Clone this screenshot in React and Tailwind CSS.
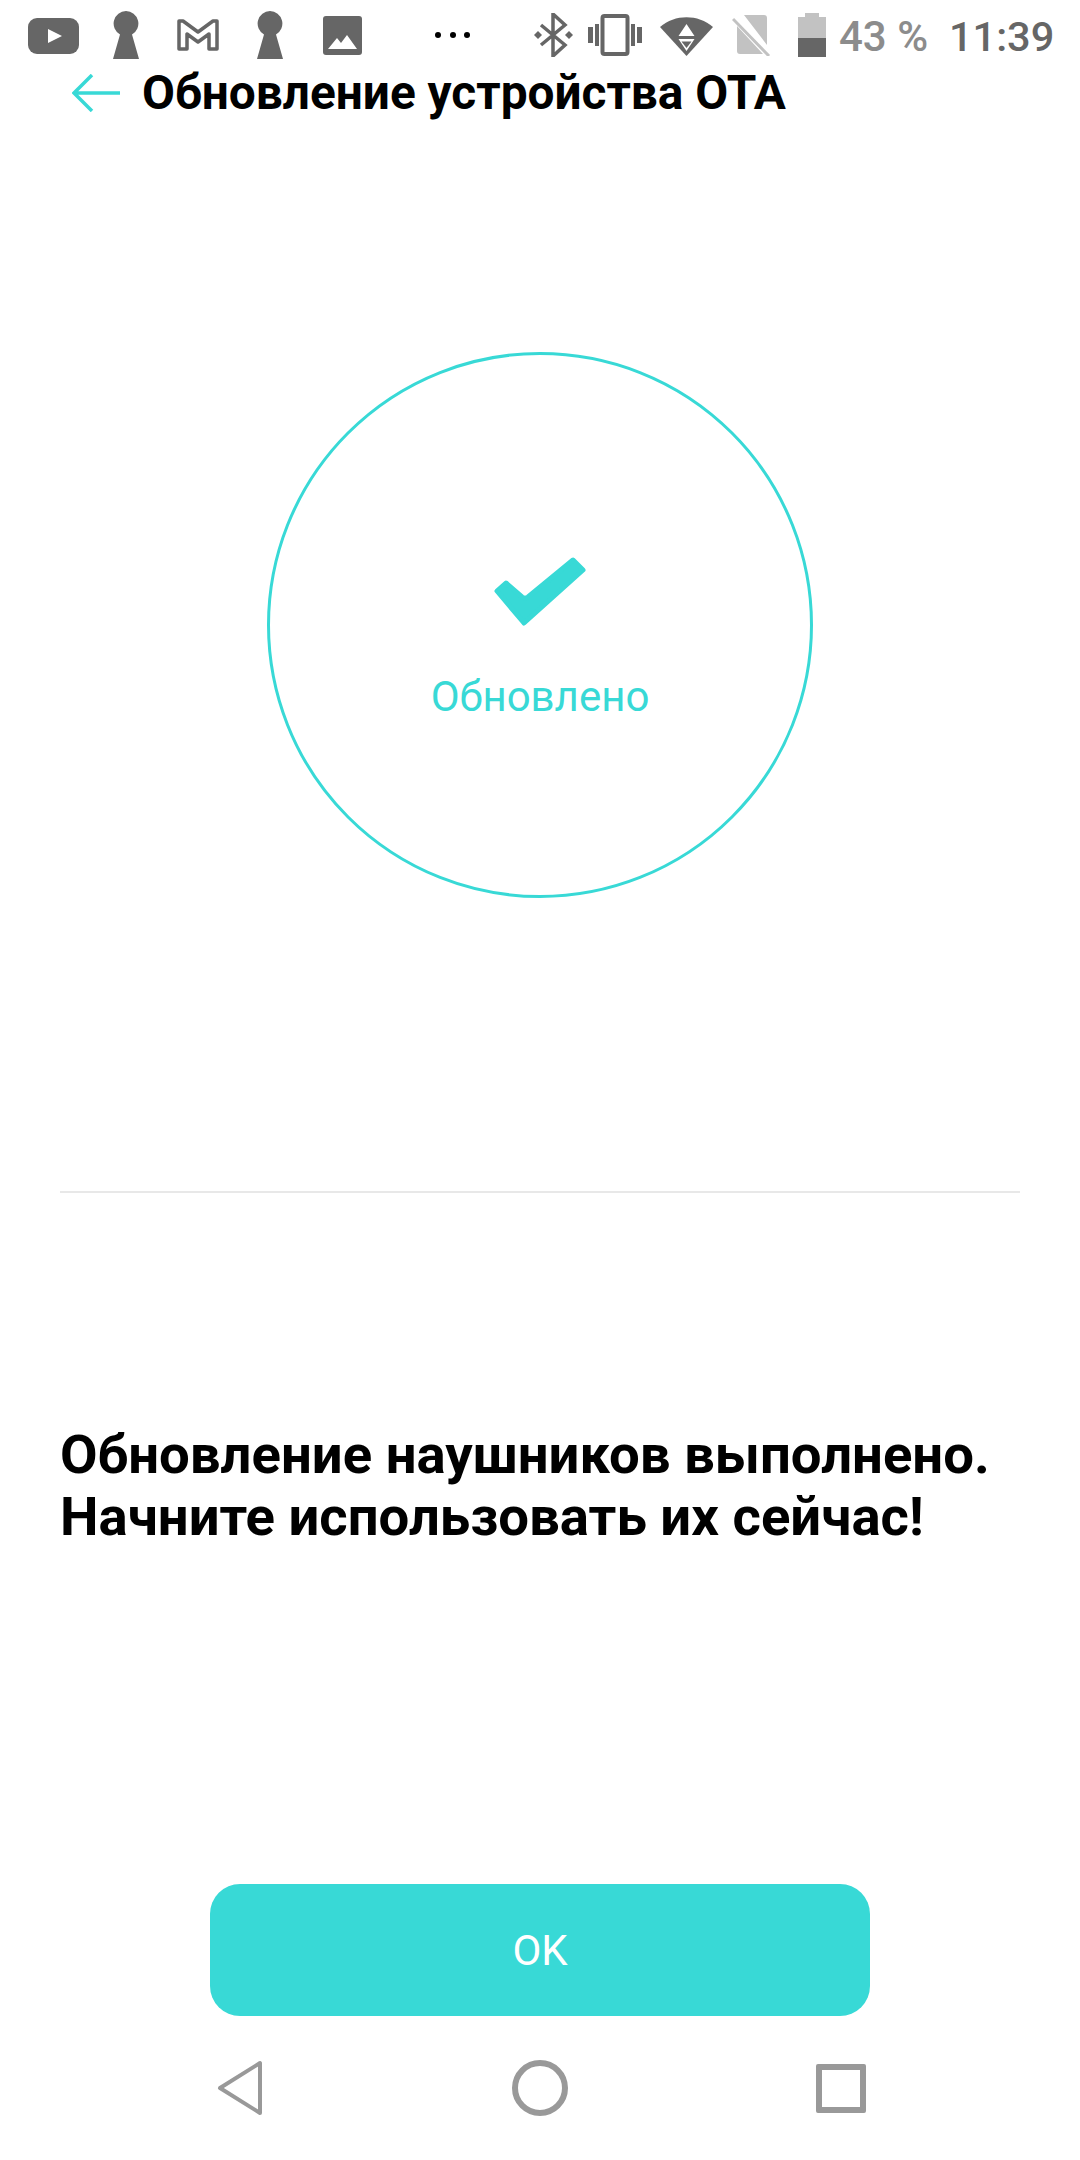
import { useState } from 'react'

const teal = '#38d9d6'

function Keyhole({ className }) {
  return (
    <svg className={className} width="26" height="48" viewBox="0 0 26 48">
      <path d="M13 0a12.500 12.500 0 0 1 6 23.400L26 48H0l7-24.600A12.500 12.500 0 0 1 13 0z" fill="#666" />
    </svg>
  )
}

function StatusBar() {
  return (
    <div className="flex h-[70px] shrink-0 items-center pl-[28px] text-[#666]">
      <svg className="mt-[2px]" width="51" height="36" viewBox="0 0 51 36">
        <rect width="51" height="36" rx="9" fill="#666" />
        <path d="M20 11l14 7-14 7z" fill="#fff" />
      </svg>
      <Keyhole className="ml-[34px]" />
      <svg className="ml-[38px]" width="42" height="32" viewBox="0 0 42 32">
        <path d="M2 2h4l15 11L36 2h4v28h-8V15l-11 8-11-8v15H2z" fill="none" stroke="#666" strokeWidth="3.500" strokeLinejoin="round" />
      </svg>
      <Keyhole className="ml-[38px]" />
      <svg className="ml-[40px]" width="39" height="39" viewBox="0 0 39 39">
        <rect width="39" height="39" rx="3" fill="#666" />
        <path d="M5 33l9-11 4 5 6-8 10 14z" fill="#fff" />
      </svg>
      <div className="ml-[73px] flex w-[35px] justify-between">
        <span className="h-[6px] w-[6px] rounded-full bg-black" />
        <span className="h-[6px] w-[6px] rounded-full bg-black" />
        <span className="h-[6px] w-[6px] rounded-full bg-black" />
      </div>
      <svg className="ml-[64px]" width="39" height="44" viewBox="0 0 39 44">
        <path d="M7 12l24 20-12 11V1l12 11L7 32" fill="none" stroke="#666" strokeWidth="3.500" />
        <path d="M0 22l4-4 4 4-4 4zM31 22l4-4 4 4-4 4z" fill="#666" />
      </svg>
      <svg className="ml-[15px]" width="54" height="42" viewBox="0 0 54 42">
        <rect x="14.500" y="2" width="25" height="38" rx="2" fill="none" stroke="#666" strokeWidth="4" />
        <path d="M0 13h5v16H0zM7 10h4v22H7zM43 10h4v22h-4zM49 13h5v16h-5z" fill="#666" />
      </svg>
      <svg className="ml-[18px]" width="53" height="42" viewBox="0 0 53 42">
        <path d="M0 13C15 0 38 0 53 13L26.500 42z" fill="#666" />
        <path d="M26.500 10l-8 12h16zM18.500 25h16l-8 12z" fill="#fff" />
        <path d="M21.500 27.500h10l-5 6.500z" fill="#666" />
      </svg>
      <svg className="ml-[19px]" width="39" height="42" viewBox="0 0 39 42">
        <path d="M12 1h20q3 0 3 3v27zM5 12l26 28H8q-3 0-3-3z" fill="#c2c2c2" />
        <path d="M1 5l36 37" stroke="#c2c2c2" strokeWidth="3" />
      </svg>
      <svg className="ml-[27px]" width="28" height="44" viewBox="0 0 28 44">
        <path d="M7 0h14v4h7v21H0V4h7z" fill="#c2c2c2" />
        <rect y="25" width="28" height="19" fill="#666" />
      </svg>
      <span className="ml-[13px] mt-[4px] w-[110px] whitespace-nowrap font-['Roboto',sans-serif] text-[42px] font-medium leading-none text-[#8c8c8c]">43 %</span>
      <span className="mt-[4px] whitespace-nowrap font-['Roboto',sans-serif] text-[41.500px] font-medium leading-none text-[#666]">11:39</span>
    </div>
  )
}

function Header() {
  return (
    <div className="flex h-[46px] shrink-0 items-center pl-[72px]">
      <svg width="48" height="38" viewBox="0 0 48 38">
        <path d="M48 19H2M20 1L2 19l18 18" fill="none" stroke={teal} strokeWidth="3.500" />
      </svg>
      <h1 className="ml-[22px] mt-[2px] whitespace-nowrap text-[47.800px] font-bold leading-none text-black">Обновление устройства ОТА</h1>
    </div>
  )
}

function Status() {
  return (
    <div className="mx-auto mt-[236px] flex h-[546px] w-[546px] shrink-0 flex-col items-center rounded-full border-[3px] border-[#38d9d6] pt-[202px]">
      <svg width="92" height="70" viewBox="0 0 92 70">
        <path
          d="M3 34L12 26L28 40Q31 42 34 40L79 3L89 13L30 66Z"
          fill={teal}
          stroke={teal}
          strokeWidth="5"
          strokeLinejoin="round"
        />
      </svg>
      <span className="mt-[49px] text-[42px] leading-none text-[#38d9d6]">Обновлено</span>
    </div>
  )
}

function NavBar() {
  return (
    <div className="flex h-[144px] shrink-0 items-center justify-between pl-[217px] pr-[214px]">
      <svg width="46" height="56" viewBox="0 0 46 56">
        <path d="M43 3v50L3 28z" fill="none" stroke="#999" strokeWidth="4" strokeLinejoin="round" />
      </svg>
      <span className="h-[56px] w-[56px] rounded-full border-[6px] border-[#999]" />
      <span className="h-[49px] w-[50px] rounded-[2px] border-[6px] border-[#999]" />
    </div>
  )
}

export default function App() {
  const [done] = useState(true)

  return (
    <div className="flex h-[2160px] w-[1080px] flex-col overflow-hidden bg-white font-['Roboto',sans-serif]">
      <StatusBar />
      <Header />
      {done && <Status />}
      <div className="mx-[60px] mt-[293px] h-[2px] shrink-0 bg-[#e8e8e8]" />
      <p className="mx-[60px] mt-[230px] shrink-0 text-[54.500px] font-bold leading-[62px] text-black">
        Обновление наушников выполнено.
        <br />
        Начните использовать их сейчас!
      </p>
      <button className="mx-auto mt-[337px] h-[132px] w-[660px] shrink-0 rounded-[30px] bg-[#38d9d6] pt-[2px] text-[42px] leading-none text-white">OK</button>
      <NavBar />
    </div>
  )
}
